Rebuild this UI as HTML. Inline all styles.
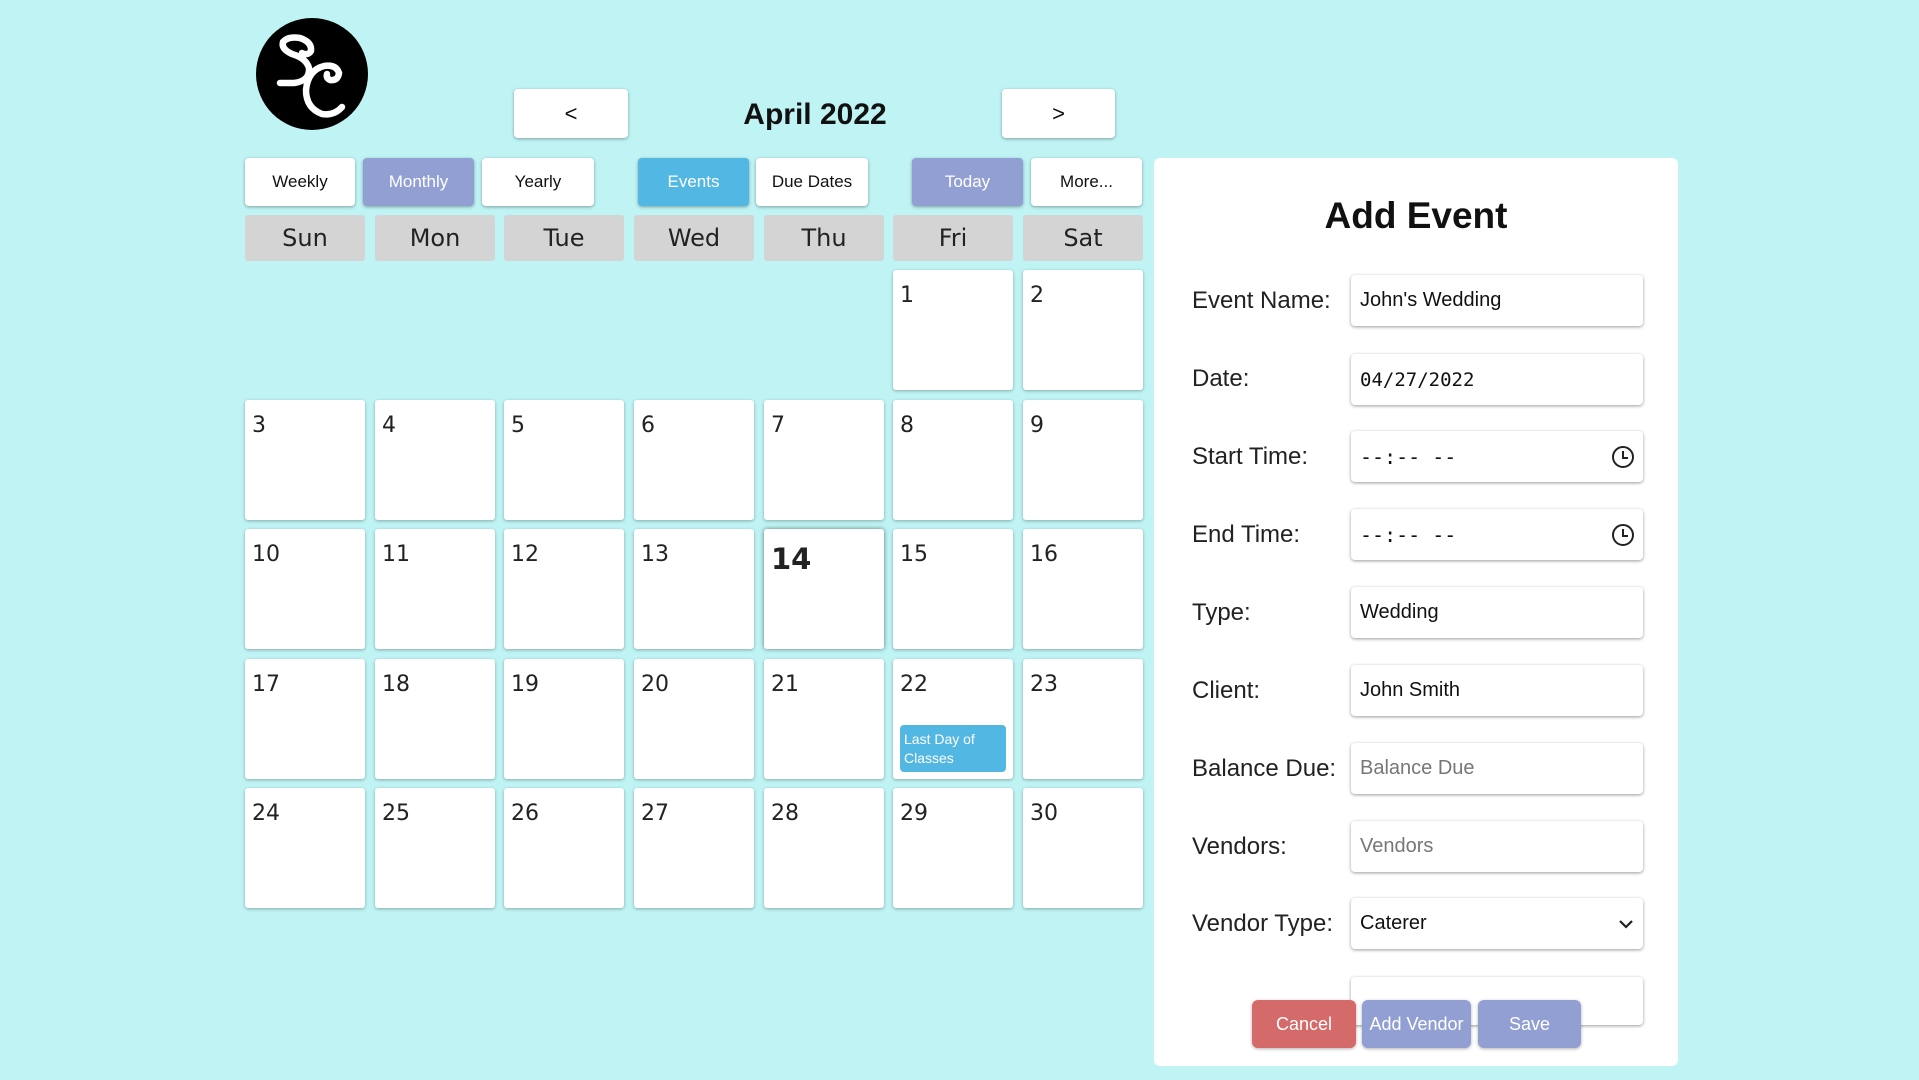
<!DOCTYPE html>
<html><head><style>
*{box-sizing:border-box;margin:0;padding:0}
body{width:1919px;height:1080px;background:#bff3f4;font-family:"Liberation Sans",sans-serif;position:relative;overflow:hidden}
.a{position:absolute}
.btn{position:absolute;top:158px;height:48px;border-radius:4px;background:#fff;box-shadow:0 1px 3px rgba(0,0,0,.35);display:flex;align-items:center;justify-content:center;font-size:17px;color:#111}
.hd{position:absolute;top:215px;width:120px;height:46px;background:#d4d4d4;border-radius:3px;display:flex;align-items:center;justify-content:center;font-size:24px;color:#222;font-family:"DejaVu Sans","Liberation Sans",sans-serif}
.c{position:absolute;width:120px;height:120px;background:#fff;border-radius:3px;box-shadow:0 1px 3px rgba(0,0,0,.3);font-family:"DejaVu Sans","Liberation Sans",sans-serif;font-size:22px;color:#222;padding:13px 0 0 7px}
.lb{position:absolute;left:1192px;font-size:24px;color:#222;font-family:"Liberation Sans",sans-serif}
.in{position:absolute;left:1351px;width:292px;height:51px;background:#fff;border-radius:4px;box-shadow:0 1px 3px rgba(0,0,0,.4);font-size:20px;padding:0 9px;display:flex;align-items:center;color:#111}
.fb{position:absolute;top:1000px;height:48px;border-radius:6px;color:#fff;font-size:18px;display:flex;align-items:center;justify-content:center;box-shadow:0 1px 3px rgba(0,0,0,.3)}
</style></head><body>
<svg class="a" style="left:256px;top:18px" width="112" height="112" viewBox="0 0 112 112">
<circle cx="56" cy="56" r="56" fill="#000"/>
<path d="M24 65 L38 65 Q54 63 53 50 Q50 40 36 36 Q25 31 27 24 Q32 18 44 20 Q56 24 55 33 Q52 38 46 35" stroke="#fff" stroke-width="6.5" fill="none" stroke-linecap="round"/>
<path d="M86 89 Q78 98 66 96 Q50 90 50 72 Q52 52 68 48 Q80 46 83 55 Q82 63 74 62 Q70 60 71 56" stroke="#fff" stroke-width="6.5" fill="none" stroke-linecap="round"/>
</svg>
<div class="btn" style="left:514px;top:89px;width:114px;height:49px;font-size:22px">&lt;</div>
<div class="btn" style="left:1002px;top:89px;width:113px;height:49px;font-size:22px">&gt;</div>
<div class="a" style="left:700px;top:98px;width:230px;text-align:center;font-size:30px;font-weight:bold;color:#111">April 2022</div>
<div class="btn" style="left:245px;width:110px">Weekly</div>
<div class="btn" style="left:363px;width:111px;background:#929fd3;color:#fff">Monthly</div>
<div class="btn" style="left:482px;width:112px">Yearly</div>
<div class="btn" style="left:638px;width:111px;background:#52b7e3;color:#fff">Events</div>
<div class="btn" style="left:756px;width:112px">Due Dates</div>
<div class="btn" style="left:912px;width:111px;background:#929fd3;color:#fff">Today</div>
<div class="btn" style="left:1031px;width:111px">More...</div>
<div class="hd" style="left:245px">Sun</div><div class="hd" style="left:375px">Mon</div><div class="hd" style="left:504px">Tue</div><div class="hd" style="left:634px">Wed</div><div class="hd" style="left:764px">Thu</div><div class="hd" style="left:893px">Fri</div><div class="hd" style="left:1023px">Sat</div>
<div class="c" style="left:893px;top:270px">1</div><div class="c" style="left:1023px;top:270px">2</div>
<div class="c" style="left:245px;top:400px">3</div><div class="c" style="left:375px;top:400px">4</div><div class="c" style="left:504px;top:400px">5</div><div class="c" style="left:634px;top:400px">6</div><div class="c" style="left:764px;top:400px">7</div><div class="c" style="left:893px;top:400px">8</div><div class="c" style="left:1023px;top:400px">9</div>
<div class="c" style="left:245px;top:529px">10</div><div class="c" style="left:375px;top:529px">11</div><div class="c" style="left:504px;top:529px">12</div><div class="c" style="left:634px;top:529px">13</div><div class="c" style="left:764px;top:529px;font-weight:bold;font-size:29px;box-shadow:0 0 5px rgba(0,0,0,.5)">14</div><div class="c" style="left:893px;top:529px">15</div><div class="c" style="left:1023px;top:529px">16</div>
<div class="c" style="left:245px;top:659px">17</div><div class="c" style="left:375px;top:659px">18</div><div class="c" style="left:504px;top:659px">19</div><div class="c" style="left:634px;top:659px">20</div><div class="c" style="left:764px;top:659px">21</div><div class="c" style="left:893px;top:659px">22</div><div class="c" style="left:1023px;top:659px">23</div>
<div class="a" style="left:900px;top:725px;width:106px;height:47px;background:#52b7e3;border-radius:4px;color:#fff;font-size:14px;padding:5px 4px;line-height:19px">Last Day of Classes</div>
<div class="c" style="left:245px;top:788px">24</div><div class="c" style="left:375px;top:788px">25</div><div class="c" style="left:504px;top:788px">26</div><div class="c" style="left:634px;top:788px">27</div><div class="c" style="left:764px;top:788px">28</div><div class="c" style="left:893px;top:788px">29</div><div class="c" style="left:1023px;top:788px">30</div>
<div class="a" style="left:1154px;top:158px;width:524px;height:908px;background:#fff;border-radius:6px"></div>
<div class="a" style="left:1154px;top:195px;width:524px;text-align:center;font-size:37px;font-weight:bold;color:#111">Add Event</div>
<div class="lb" style="top:287px">Event Name:</div><div class="in" style="top:275px">John's Wedding</div>
<div class="lb" style="top:365px">Date:</div><div class="in" style="top:354px;font-family:'DejaVu Sans Mono',monospace;font-size:19px">04/27/2022</div>
<div class="lb" style="top:443px">Start Time:</div><div class="in" style="top:431px;justify-content:space-between"><span style="font-family:'DejaVu Sans Mono',monospace">--:-- --</span><span style="width:22px;height:22px;border:2px solid #222;border-radius:50%;position:relative"><span style="position:absolute;left:8px;top:3px;width:2px;height:8px;background:#222"></span><span style="position:absolute;left:8px;top:9px;width:6px;height:2px;background:#222"></span></span></div>
<div class="lb" style="top:521px">End Time:</div><div class="in" style="top:509px;justify-content:space-between"><span style="font-family:'DejaVu Sans Mono',monospace">--:-- --</span><span style="width:22px;height:22px;border:2px solid #222;border-radius:50%;position:relative"><span style="position:absolute;left:8px;top:3px;width:2px;height:8px;background:#222"></span><span style="position:absolute;left:8px;top:9px;width:6px;height:2px;background:#222"></span></span></div>
<div class="lb" style="top:599px">Type:</div><div class="in" style="top:587px">Wedding</div>
<div class="lb" style="top:677px">Client:</div><div class="in" style="top:665px">John Smith</div>
<div class="lb" style="top:755px">Balance Due:</div><div class="in" style="top:743px;color:#777">Balance Due</div>
<div class="lb" style="top:833px">Vendors:</div><div class="in" style="top:821px;color:#777">Vendors</div>
<div class="lb" style="top:910px">Vendor Type:</div><div class="in" style="top:898px;justify-content:space-between">Caterer<svg width="16" height="10"><path d="M2 2 L8 8 L14 2" stroke="#222" stroke-width="2.2" fill="none"/></svg></div>
<div class="in" style="top:977px;height:48px"></div>
<div class="fb" style="left:1252px;width:104px;background:#d46b6a">Cancel</div>
<div class="fb" style="left:1362px;width:109px;background:#929fd3">Add Vendor</div>
<div class="fb" style="left:1478px;width:103px;background:#929fd3">Save</div>
</body></html>
